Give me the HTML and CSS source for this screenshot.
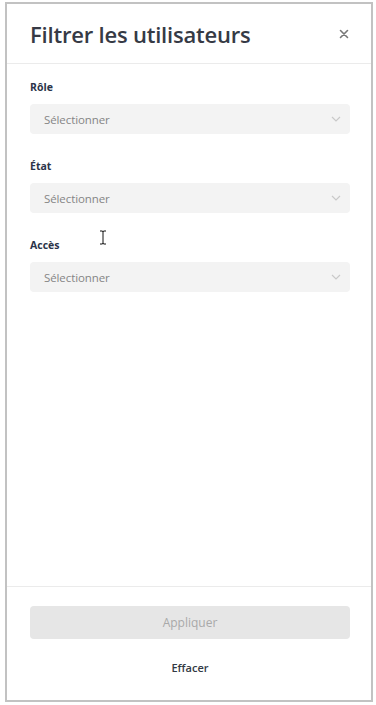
FILE: index.html
```html
<!DOCTYPE html>
<html lang="fr">
<head>
    <meta charset="UTF-8">
    <meta name="viewport" content="width=device-width, initial-scale=1.0">
    <title>Filtrer les utilisateurs</title>
    <link rel="stylesheet" href="styles.css">
</head>
<body>
    <div class="panel">
        <!-- En-tête -->
        <div class="panel-header">
            <h1 class="panel-title">Filtrer les utilisateurs</h1>
            <button class="close-btn" aria-label="Fermer">
                <svg width="10" height="10" viewBox="0 0 10 10">
                    <path d="M1.5 1.5 L8.5 8.5 M8.5 1.5 L1.5 8.5" stroke="#777" stroke-width="1.6" stroke-linecap="round"/>
                </svg>
            </button>
        </div>

        <!-- Filtres -->
        <div class="panel-body">
            <div class="field">
                <label class="field-label">Rôle</label>
                <div class="select">
                    <span>Sélectionner</span>
                    <svg class="chevron" width="10" height="6" viewBox="0 0 10 6">
                        <path d="M1 1 L5 5 L9 1" fill="none" stroke="#c9c9c9" stroke-width="1.2"/>
                    </svg>
                </div>
            </div>
            <div class="field">
                <label class="field-label">État</label>
                <div class="select">
                    <span>Sélectionner</span>
                    <svg class="chevron" width="10" height="6" viewBox="0 0 10 6">
                        <path d="M1 1 L5 5 L9 1" fill="none" stroke="#c9c9c9" stroke-width="1.2"/>
                    </svg>
                </div>
            </div>
            <div class="field">
                <label class="field-label">Accès</label>
                <div class="select">
                    <span>Sélectionner</span>
                    <svg class="chevron" width="10" height="6" viewBox="0 0 10 6">
                        <path d="M1 1 L5 5 L9 1" fill="none" stroke="#c9c9c9" stroke-width="1.2"/>
                    </svg>
                </div>
            </div>

            <!-- curseur texte -->
            <svg class="cursor" width="8" height="15" viewBox="0 0 8 15">
                <path d="M1 1 H3 M5 1 H7 M4 1.5 V13.5 M1 14 H3 M5 14 H7 M3 1 Q4 1 4 2 Q4 1 5 1 M3 14 Q4 14 4 13 Q4 14 5 14" fill="none" stroke="#111" stroke-width="1"/>
            </svg>
        </div>

        <!-- Pied -->
        <div class="panel-footer">
            <button class="apply-btn" disabled>Appliquer</button>
            <button class="clear-btn">Effacer</button>
        </div>
    </div>
</body>
</html>
```

FILE: styles.css
```css
* {
    margin: 0;
    padding: 0;
    box-sizing: border-box;
}

body {
    font-family: "Open Sans", "Noto Sans", sans-serif;
    background: #ffffff;
    color: #333;
}

.panel {
    width: 368px;
    height: 700px;
    margin: 2px 0 0 5px;
    border: 2px solid #c2c2c2;
    background: #fff;
    display: flex;
    flex-direction: column;
}

/* En-tête */
.panel-header {
    height: 60px;
    padding: 0 21px 0 23px;
    display: flex;
    align-items: center;
    justify-content: space-between;
    border-bottom: 1px solid #ebebeb;
}

.panel-title {
    font-size: 22px;
    font-weight: 600;
    color: #363a45;
    letter-spacing: -0.2px;
}

.close-btn {
    background: none;
    border: none;
    width: 20px;
    height: 20px;
    display: flex;
    align-items: center;
    justify-content: center;
    margin-right: -4px;
    cursor: pointer;
}

/* Filtres */
.panel-body {
    flex: 1;
    padding: 16px 21px 0 23px;
    display: flex;
    flex-direction: column;
    gap: 25px;
    position: relative;
}

.field-label {
    display: block;
    font-size: 10.5px;
    font-weight: 700;
    color: #2b3449;
    margin-bottom: 10px;
}

.select {
    height: 30px;
    background: #f3f3f3;
    border-radius: 4px;
    padding: 0 9px 0 14px;
    display: flex;
    align-items: center;
    justify-content: space-between;
    font-size: 11.5px;
    letter-spacing: -0.1px;
    color: #858585;
}

.cursor {
    position: absolute;
    left: 92px;
    top: 166px;
}

/* Pied */
.panel-footer {
    border-top: 1px solid #ebebeb;
    padding: 19px 21px 0 23px;
    height: 114px;
    display: flex;
    flex-direction: column;
    align-items: center;
}

.apply-btn {
    width: 100%;
    height: 33px;
    border: none;
    border-radius: 4px;
    background: #e6e6e6;
    color: #a9a9a9;
    font-family: inherit;
    font-size: 12px;
}

.clear-btn {
    margin-top: 21px;
    background: none;
    border: none;
    font-family: inherit;
    font-size: 11px;
    font-weight: 600;
    color: #333a44;
    cursor: pointer;
}
```
